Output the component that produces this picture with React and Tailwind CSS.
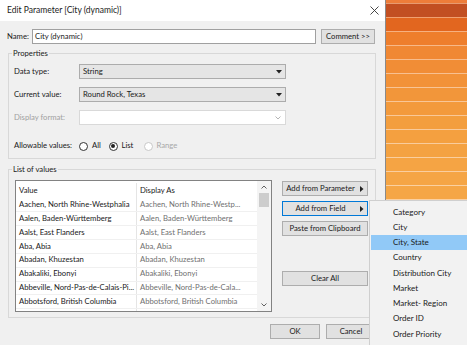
const rows = [
  ["Aachen, North Rhine-Westphalia", "Aachen, North Rhine-Westp..."],
  ["Aalen, Baden-Württemberg", "Aalen, Baden-Württemberg"],
  ["Aalst, East Flanders", "Aalst, East Flanders"],
  ["Aba, Abia", "Aba, Abia"],
  ["Abadan, Khuzestan", "Abadan, Khuzestan"],
  ["Abakaliki, Ebonyi", "Abakaliki, Ebonyi"],
  ["Abbeville, Nord-Pas-de-Calais-Pi...", "Abbeville, Nord-Pas-de-Cala..."],
  ["Abbotsford, British Columbia", "Abbotsford, British Columbia"],
  ["Abeokuta, Ogun", "Abeokuta, Ogun"],
];

const menuItems = [
  "Category",
  "City",
  "City, State",
  "Country",
  "Distribution City",
  "Market",
  "Market- Region",
  "Order ID",
  "Order Priority",
];

const stripes = [
  "h-[3px] bg-[#ee7d3a]",
  "h-[14px] bg-[#c24f22] border-t border-[#e89a70]",
  "h-[14px] bg-[#e2661f] border-t border-[#f0a070]",
  "h-[14px] bg-[#ee7e2c] border-t border-[#f6b080]",
  "h-[14px] bg-[#f08834] border-t border-[#f7b888]",
  "h-[14px] bg-[#f18d36] border-t border-[#f8bc8c]",
  "h-[14px] bg-[#f29238] border-t border-[#f8c090]",
  "h-[14px] bg-[#f2963a] border-t border-[#f8c494]",
  "h-[14px] bg-[#f39a3c] border-t border-[#f9c696]",
  "h-[14px] bg-[#f39e3e] border-t border-[#f9c898]",
  "h-[14px] bg-[#f4a040] border-t border-[#f9ca9a]",
  "h-[14px] bg-[#f4a242] border-t border-[#f9cc9c]",
  "h-[14px] bg-[#f5a444] border-t border-[#face9e]",
  "h-[14px] bg-[#f5a545] border-t border-[#face9f]",
  "h-[14px] bg-[#f5a646] border-t border-[#fad0a0]",
  "h-[14px] bg-[#f5a747] border-t border-[#fad0a2]",
  "h-[14px] bg-[#f5a848] border-t border-[#fad0a2]",
  "h-[14px] bg-[#f5a848] border-t border-[#fad0a2]",
  "h-[14px] bg-[#f5a848] border-t border-[#fad0a2]",
  "h-[14px] bg-[#f5a848] border-t border-[#fad0a2]",
  "h-[14px] bg-[#f5a848] border-t border-[#fad0a2]",
  "h-[14px] bg-[#f5a848] border-t border-[#fad0a2]",
  "h-[14px] bg-[#f5a848] border-t border-[#fad0a2]",
  "h-[14px] bg-[#f5a848] border-t border-[#fad0a2]",
  "h-[14px] bg-[#f5a848] border-t border-[#fad0a2]",
];

function DownTri() {
  return (
    <svg width="6" height="4" viewBox="0 0 6 4">
      <polygon points="0,0 6,0 3,3.5" fill="#222" />
    </svg>
  );
}

function RightTri() {
  return (
    <svg width="4" height="6" viewBox="0 0 4 6">
      <polygon points="0,0 3.5,3 0,6" fill="#222" />
    </svg>
  );
}

function Chevron({ up = false, color = "#555" }) {
  return (
    <svg width="6" height="4" viewBox="0 0 6 4">
      <polyline
        points={up ? "0.5,3.5 3,1 5.5,3.5" : "0.5,0.5 3,3 5.5,0.5"}
        fill="none"
        stroke={color}
        strokeWidth="1"
      />
    </svg>
  );
}

function Radio({ checked = false, disabled = false }) {
  return (
    <span
      className={
        "flex items-center justify-center w-[9px] h-[9px] rounded-full border bg-white " +
        (disabled ? "border-[#c8c8c8]" : "border-[#333333]")
      }
    >
      {checked && <span className="block w-[4px] h-[4px] rounded-full bg-[#222222]" />}
    </span>
  );
}

function Btn({ children, className = "", arrow = false, focus = false }) {
  return (
    <div
      className={
        "relative flex items-center justify-center h-[15px] bg-[#e1e1e1] border leading-none " +
        (focus ? "border-[#0078d7] " : "border-[#adadad] ") +
        (arrow ? "pr-[9px] " : "") +
        className
      }
    >
      <span className="whitespace-nowrap">{children}</span>
      {arrow && (
        <span className="absolute right-[3px] top-[4px]">
          <RightTri />
        </span>
      )}
    </div>
  );
}

function Dialog() {
  return (
    <div className="flex flex-col w-[386px] h-[345px] border-r border-[#8a8a8a] shrink-0">
      <div className="flex items-center justify-between h-[21px] bg-white pl-[7px] pr-[6px]">
        <span className="leading-none text-[8.5px]">Edit Parameter [City (dynamic)]</span>
        <svg width="9" height="9" viewBox="0 0 9 9">
          <line x1="0.5" y1="0.5" x2="8.5" y2="8.5" stroke="#333" strokeWidth="0.9" />
          <line x1="8.5" y1="0.5" x2="0.5" y2="8.5" stroke="#333" strokeWidth="0.9" />
        </svg>
      </div>
      <div className="flex-1 flex flex-col bg-[#f0f0f0] pl-[8px] pr-[9px]">
        {/* Name row */}
        <div className="flex items-center h-[15px] mt-[8px]">
          <span className="w-[25px] -ml-px leading-none">Name:</span>
          <div className="flex items-center w-[284px] h-[15px] bg-white border border-[#a0a0a0] pl-[2px] leading-none">
            City (dynamic)
          </div>
          <Btn className="ml-[5px] w-[54px]">Comment &gt;&gt;</Btn>
        </div>

        {/* Properties */}
        <fieldset className="mt-[4px] border border-[#d8d8d8] p-0">
          <legend className="ml-[3px] px-[1px] leading-[10px]">Properties</legend>
          <div className="flex flex-col pl-[5px] pt-[6px] pb-[5px]">
            <div className="flex items-center h-[15px]">
              <span className="w-[65px] leading-none">Data type:</span>
              <div className="flex items-center justify-between w-[207px] h-[15px] bg-[#e5e5e5] border border-[#acacac] pl-[3px] pr-[3px] leading-none">
                <span>String</span>
                <DownTri />
              </div>
            </div>
            <div className="flex items-center h-[15px] mt-[8px]">
              <span className="w-[65px] leading-none">Current value:</span>
              <div className="flex items-center justify-between w-[207px] h-[15px] bg-[#e5e5e5] border border-[#acacac] pl-[3px] pr-[3px] leading-none">
                <span>Round Rock, Texas</span>
                <DownTri />
              </div>
            </div>
            <div className="flex items-center h-[15px] mt-[8px]">
              <span className="w-[65px] leading-none text-[#a0a0a0]">Display format:</span>
              <div className="flex items-center justify-end w-[207px] h-[15px] bg-white border border-[#d9d9d9] pr-[4px]">
                <Chevron color="#b5b5b5" />
              </div>
            </div>
            <div className="flex items-center h-[14px] mt-[14px]">
              <span className="w-[65px] leading-none">Allowable values:</span>
              <div className="flex items-center w-[29.5px]">
                <Radio />
                <span className="ml-[4px] leading-none">All</span>
              </div>
              <div className="flex items-center w-[35px]">
                <Radio checked />
                <span className="ml-[4px] leading-none">List</span>
              </div>
              <div className="flex items-center">
                <Radio disabled />
                <span className="ml-[4px] leading-none text-[#a8a8a8]">Range</span>
              </div>
            </div>
          </div>
        </fieldset>

        {/* List of values */}
        <fieldset className="mt-[5px] border border-[#d8d8d8] p-0">
          <legend className="ml-[3px] px-[1px] leading-[10px]">List of values</legend>
          <div className="flex pl-[6px] pt-[6px] pb-[5px]">
            <div className="flex w-[257px] h-[132px] bg-white border border-[#828282] overflow-hidden">
              <div className="flex flex-col w-[241px] pt-[2px]">
                <div className="flex h-[15.5px] items-center shrink-0">
                  <div className="w-[121px] h-full flex items-center pl-[3px] border-r border-[#e5e5e5] leading-none">Value</div>
                  <div className="flex-1 h-full flex items-center pl-[3px] leading-none">Display As</div>
                </div>
                {rows.map((r, i) => (
                  <div key={i} className="flex h-[13.85px] items-center shrink-0 border-b border-[#f0f0f0]">
                    <div className="w-[121px] h-full flex items-center pl-[3px] border-r border-[#e5e5e5] whitespace-nowrap overflow-hidden leading-none">
                      {r[0]}
                    </div>
                    <div className="flex-1 h-full flex items-center pl-[3px] whitespace-nowrap overflow-hidden leading-none text-[#707070]">
                      {r[1]}
                    </div>
                  </div>
                ))}
              </div>
              <div className="flex flex-col items-center w-[14px] bg-[#f4f4f4]">
                <div className="h-[12px] flex items-center justify-center">
                  <Chevron up color="#606060" />
                </div>
                <div className="w-[10px] h-[14px] bg-[#cdcdcd]" />
                <div className="flex-1" />
                <div className="h-[12px] flex items-center justify-center">
                  <Chevron color="#606060" />
                </div>
              </div>
            </div>
            <div className="flex flex-col w-[86px] ml-[10px] pt-[1px]">
              <Btn arrow>Add from Parameter</Btn>
              <Btn arrow focus className="mt-[5px]">Add from Field</Btn>
              <Btn className="mt-[5px]">Paste from Clipboard</Btn>
              <Btn className="mt-[35px]">Clear All</Btn>
            </div>
          </div>
        </fieldset>

        <div className="flex justify-end mt-[6px]">
          <Btn className="w-[50px]">OK</Btn>
          <Btn className="w-[50px] ml-[6px]">Cancel</Btn>
        </div>
      </div>
    </div>
  );
}

function Stripes() {
  return (
    <div className="flex-1 flex flex-col overflow-hidden">
      {stripes.map((c, i) => (
        <div key={i} className={"shrink-0 " + c} />
      ))}
    </div>
  );
}

function Menu() {
  return (
    <div className="absolute left-[369px] top-[200px] w-[110px] h-[150px] bg-[#f2f2f2] border-l border-t border-[#cfcfcf] pt-[3px] pl-[1px] text-[8px]">
      {menuItems.map((m, i) => (
        <div
          key={i}
          className={
            "flex items-center h-[15.25px] pl-[22px] leading-none text-[#1a1a1a] " +
            (m === "City, State" ? "bg-[#91c9f7]" : "")
          }
        >
          {m}
        </div>
      ))}
    </div>
  );
}

export default function App() {
  return (
    <div className="relative flex w-[467px] h-[345px] overflow-hidden font-['Lato',sans-serif] text-[7.7px] text-[#1a1a1a]">
      <Dialog />
      <Stripes />
      <Menu />
    </div>
  );
}
